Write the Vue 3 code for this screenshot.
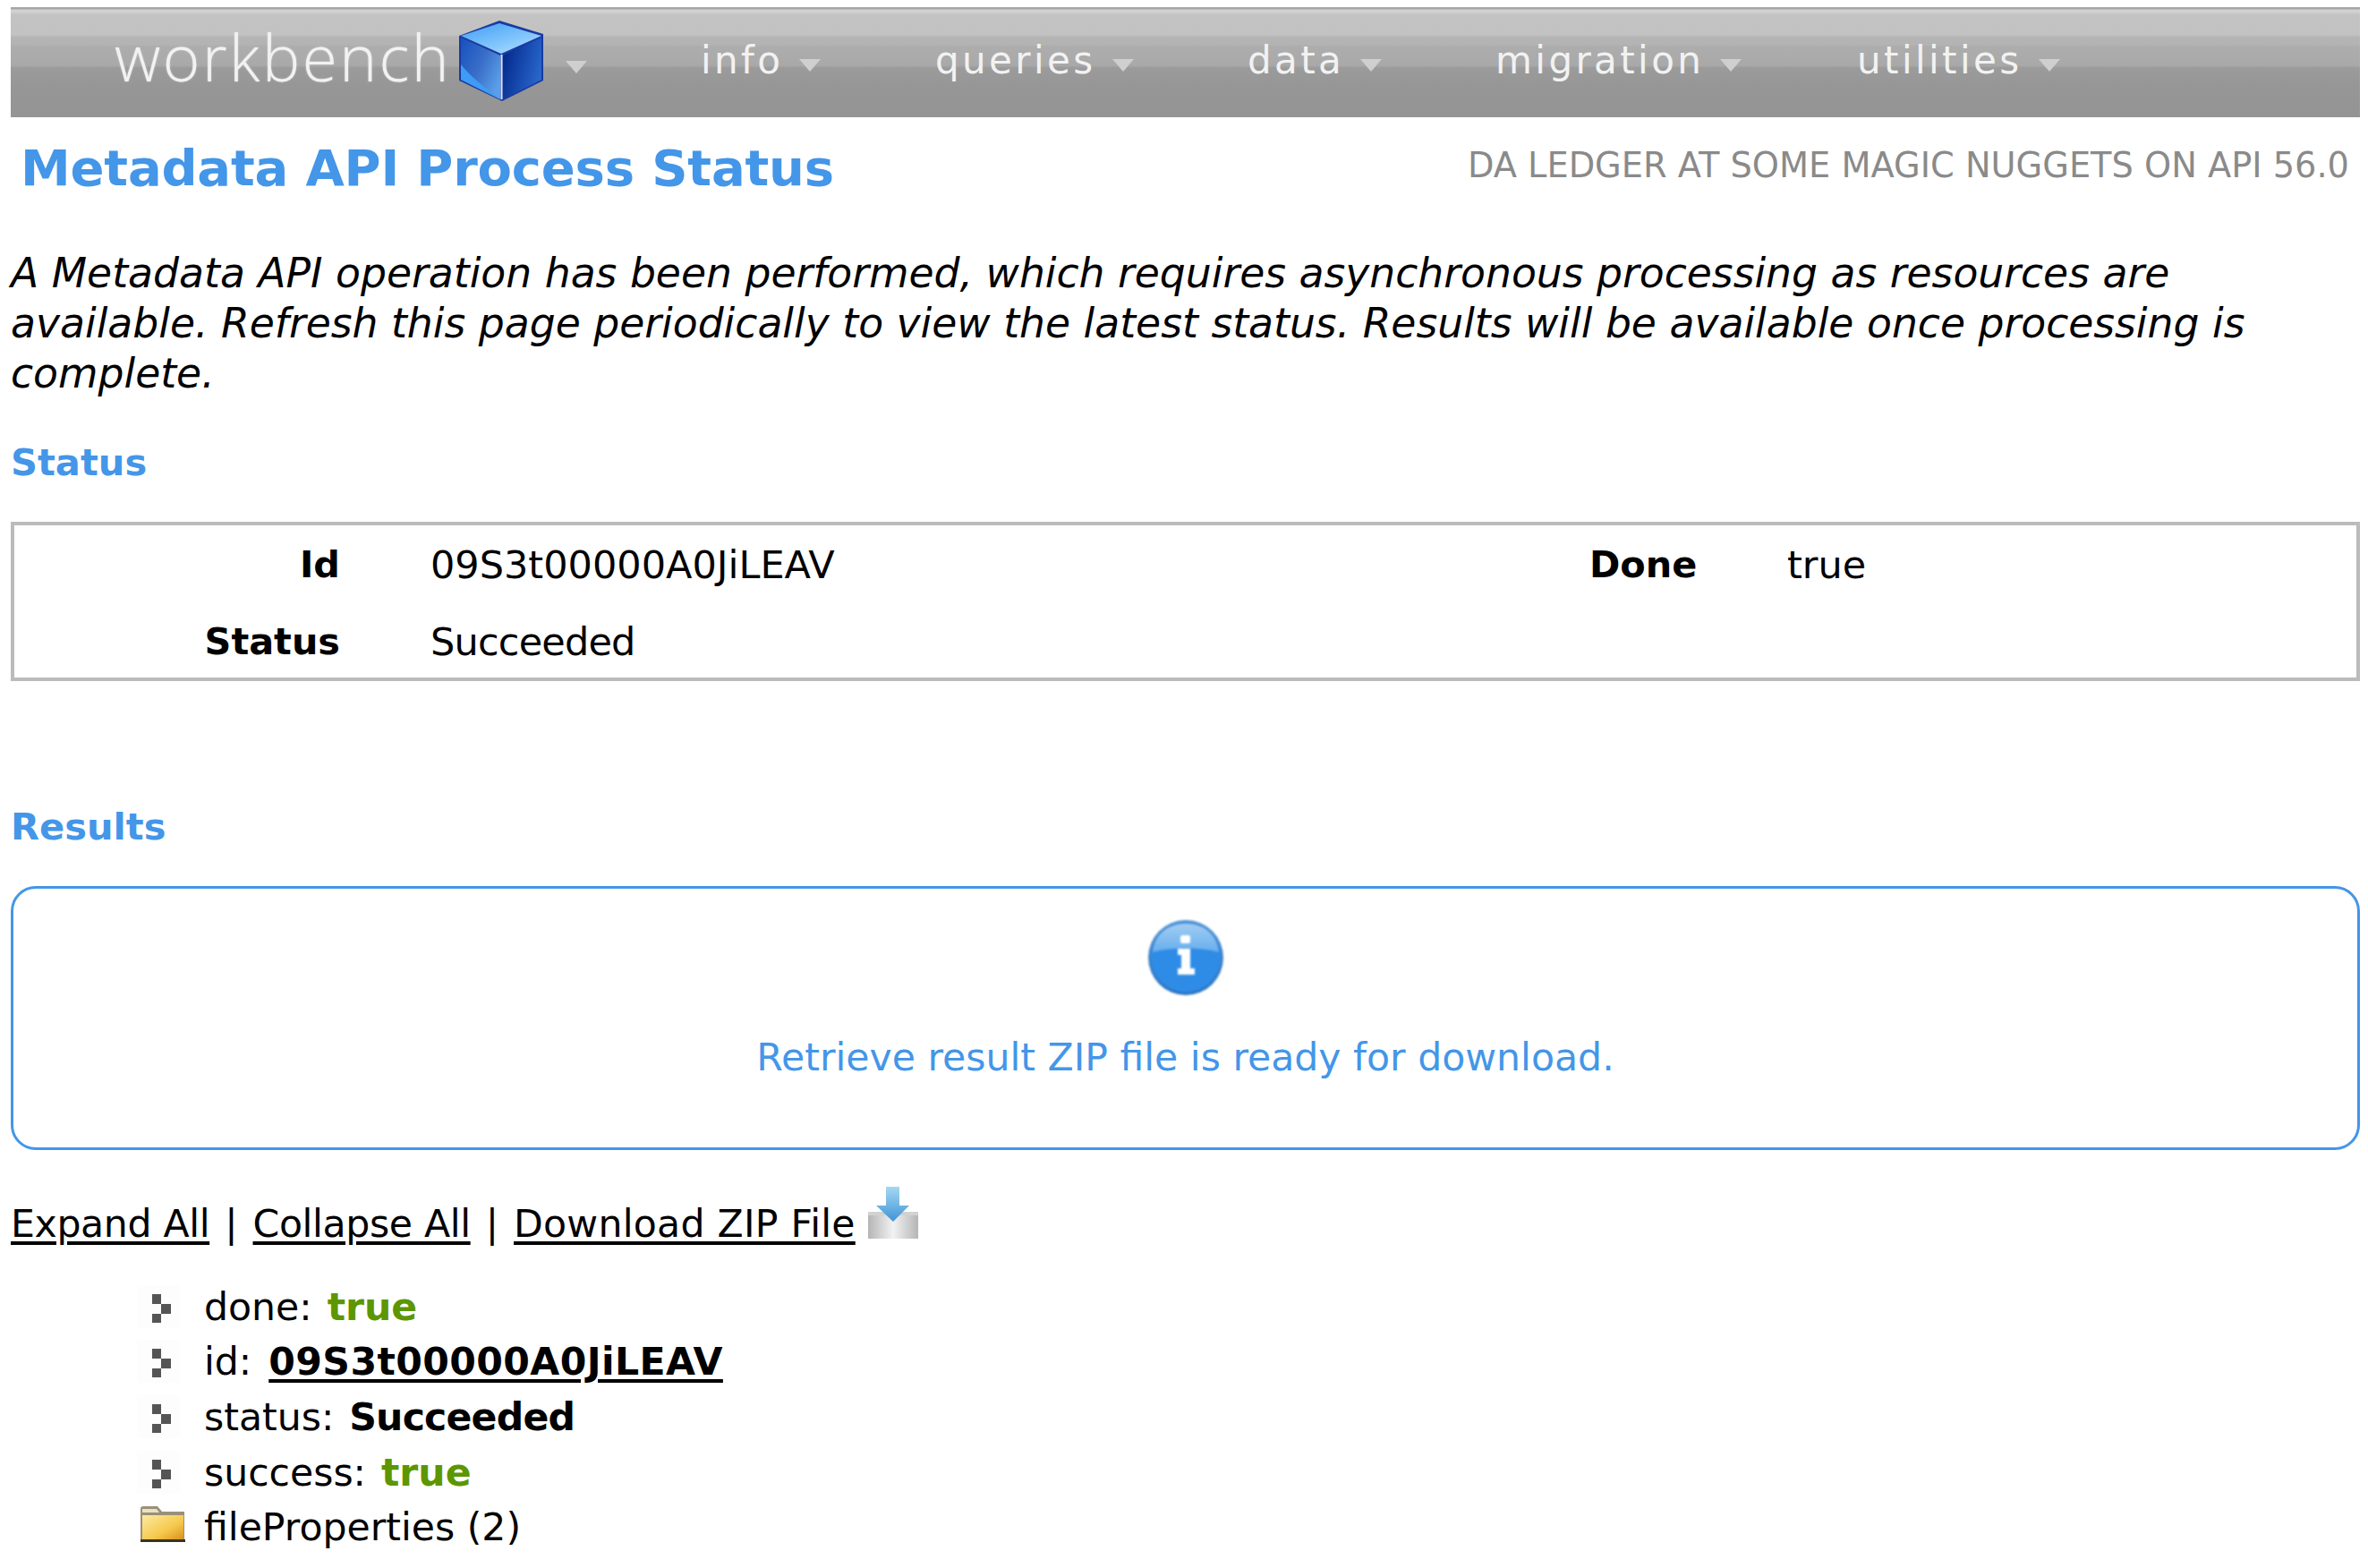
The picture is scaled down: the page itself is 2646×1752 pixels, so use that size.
<script setup>
const navItems = [
  { label: 'info', width: 262 },
  { label: 'queries', width: 349 },
  { label: 'data', width: 277 },
  { label: 'migration', width: 404 },
  { label: 'utilities', width: 260 }
]
const rows = [
  { key: 'done', value: 'true', kind: 'bool' },
  { key: 'id', value: '09S3t00000A0JiLEAV', kind: 'link' },
  { key: 'status', value: 'Succeeded', kind: 'strong' },
  { key: 'success', value: 'true', kind: 'bool' }
]
</script>

<template>
  <div class="page">
    <nav class="nav">
      <a class="logo">
        <span class="logo-text">workbench</span>
        <svg class="cube" viewBox="0 0 100 96" width="100" height="96">
          <defs>
            <linearGradient id="ctop" x1="0" y1="0" x2="0.8" y2="1">
              <stop offset="0" stop-color="#3f9df5" />
              <stop offset="1" stop-color="#a8dcff" />
            </linearGradient>
            <linearGradient id="cleft" x1="0" y1="0" x2="1" y2="0.7">
              <stop offset="0" stop-color="#1550c0" />
              <stop offset="0.55" stop-color="#3a6fc8" />
              <stop offset="1" stop-color="#5a9fe8" />
            </linearGradient>
            <linearGradient id="cright" x1="0" y1="0.3" x2="1" y2="0.7">
              <stop offset="0" stop-color="#032a8c" />
              <stop offset="1" stop-color="#2b6ad0" />
            </linearGradient>
          </defs>
          <path d="M46 1 95 16 95 68 49 91 1 68 1 18Z" fill="#1a3aa0" />
          <path d="M46 4 93 18 48 38 3 18Z" fill="url(#ctop)" />
          <path d="M3 20 47 40 47 89 3 67Z" fill="url(#cleft)" />
          <path d="M50 40 93 20 93 67 50 89Z" fill="url(#cright)" />
          <path d="M3 50C12 62 30 76 47 89L3 67Z" fill="#3e9bf6" />
          <path d="M48.500 39V89" stroke="#dbe6f6" stroke-width="2" />
        </svg>
        <i class="caret"></i>
      </a>
      <ul class="menu">
        <li v-for="item in navItems" :key="item.label" class="menu-item" :style="{ width: item.width + 'px' }">
          <span>{{ item.label }}</span>
          <i class="caret"></i>
        </li>
      </ul>
    </nav>

    <header class="title-row">
      <h1>Metadata API Process Status</h1>
      <div class="user">DA LEDGER AT SOME MAGIC NUGGETS ON API 56.0</div>
    </header>

    <p class="intro">A Metadata API operation has been performed, which requires asynchronous processing as resources are available. Refresh this page periodically to view the latest status. Results will be available once processing is complete.</p>

    <h2 class="status-heading">Status</h2>
    <div class="status-box">
      <div class="label">Id</div>
      <div class="value">09S3t00000A0JiLEAV</div>
      <div class="label">Done</div>
      <div class="value last">true</div>
      <div class="label">Status</div>
      <div class="value narrow">Succeeded</div>
    </div>

    <h2 class="results-heading">Results</h2>
    <div class="info-box">
      <svg class="info-icon" viewBox="0 0 84 84" width="84" height="84">
        <defs>
          <linearGradient id="iball" x1="0" y1="0" x2="0" y2="1">
            <stop offset="0" stop-color="#4f93d6" />
            <stop offset="1" stop-color="#2a76c4" />
          </linearGradient>
          <linearGradient id="igloss" x1="0" y1="0" x2="0" y2="1">
            <stop offset="0" stop-color="#a2cdf2" />
            <stop offset="1" stop-color="#66aeee" />
          </linearGradient>
        </defs>
        <circle cx="42" cy="42" r="42" fill="url(#iball)" />
        <circle cx="42" cy="42" r="38.500" fill="#2f8ce6" />
        <path d="M5 36C7 16 22 4 42 4S77 16 79 36C60 30 24 30 5 36Z" fill="url(#igloss)" />
        <rect x="36" y="17" width="11" height="9" rx="2" fill="#fff" />
        <path d="M33 32H47V54H52V61H33V54H37V39H33Z" fill="#fff" />
      </svg>
      <div class="info-text">Retrieve result ZIP file is ready for download.</div>
    </div>

    <div class="links">
      <a class="tight">Expand All</a><span class="sep">|</span><a class="tight">Collapse All</a><span class="sep">|</span><a class="wide">Download ZIP File</a>
      <svg class="dl-icon" viewBox="0 0 58 58" width="58" height="58">
        <defs>
          <linearGradient id="dbox" x1="0" y1="0" x2="1" y2="0">
            <stop offset="0" stop-color="#b5b5b5" />
            <stop offset="0.5" stop-color="#f2f2f2" />
            <stop offset="1" stop-color="#b5b5b5" />
          </linearGradient>
          <linearGradient id="darrow" x1="0" y1="0" x2="0" y2="1">
            <stop offset="0" stop-color="#a5d8f2" />
            <stop offset="1" stop-color="#3f94d8" />
          </linearGradient>
        </defs>
        <rect x="1" y="28" width="56" height="30" fill="url(#dbox)" />
        <path d="M1 28H57V32H1Z" fill="#d2d2d2" />
        <path d="M21 0H36V21H47L29 39 10 21H21Z" fill="url(#darrow)" />
      </svg>
    </div>

    <ul class="tree">
      <li v-for="row in rows" :key="row.key" class="tree-row">
        <svg class="bullet" viewBox="0 0 48 48" width="48" height="48">
          <rect x="0" y="0" width="48" height="48" fill="#fdfdfd" />
          <rect x="17" y="10" width="10" height="11" fill="#555" />
          <rect x="27" y="21" width="11" height="11" fill="#555" />
          <rect x="17" y="32" width="10" height="10" fill="#555" />
        </svg>
        <span class="key">{{ row.key }}:</span>
        <a v-if="row.kind === 'link'" class="val strong link">{{ row.value }}</a>
        <span v-else class="val strong" :class="{ green: row.kind === 'bool', narrow: row.kind === 'strong' }">{{ row.value }}</span>
      </li>
      <li class="tree-row">
        <svg class="folder" viewBox="0 0 52 40" width="52" height="40">
          <defs>
            <linearGradient id="fold" x1="0" y1="0" x2="1" y2="1">
              <stop offset="0" stop-color="#fbeaa0" />
              <stop offset="0.6" stop-color="#f6c94e" />
              <stop offset="1" stop-color="#d8921c" />
            </linearGradient>
          </defs>
          <path d="M1 3C1 1 2 0 4 0H20L25 6H50V40H1Z" fill="#9a9078" />
          <path d="M3 3H19L22 7H3Z" fill="#e9e2c2" />
          <rect x="3" y="10" width="46" height="27" fill="url(#fold)" />
          <rect x="1" y="37" width="50" height="3" fill="#3a3320" />
        </svg>
        <span class="key">fileProperties (2)</span>
      </li>
    </ul>
  </div>
</template>

<style scoped>
.page {
  box-sizing: border-box;
  width: 2646px;
  height: 1752px;
  overflow: hidden;
  padding: 8px 9px 0 12px;
  font-family: "DejaVu Sans", Verdana, sans-serif;
  font-size: 42.6px;
  color: #000;
  background: #fff;
}
ul { list-style: none; margin: 0; padding: 0; }
.nav {
  display: flex;
  align-items: flex-start;
  height: 123px;
  background: linear-gradient(to bottom, #a6a6a6 0, #a6a6a6 2px, #d2d2d2 3px, #d0d0d0 6px, #c3c3c3 8px, #c2c2c2 31px, #b5b5b5 33px, #b3b3b3 42px, #adadad 44px, #a9a9a9 65px, #9b9b9b 68px, #969696 90px, #949494 123px);
}
.logo {
  display: flex;
  align-items: flex-start;
  width: 771px;
  flex: none;
  padding-left: 116px;
  box-sizing: border-box;
}
.logo-text {
  width: 384px;
  margin-top: 8px;
  font-family: "Open Sans", sans-serif;
  font-weight: 300;
  font-size: 71px;
  line-height: 96px;
  letter-spacing: 2.500px;
  color: #f2f2f2;
  text-shadow: 0 0 2px rgba(255, 255, 255, 0.6);
  white-space: nowrap;
}
.cube { flex: none; margin-top: 14px; filter: blur(0.5px); }
.caret {
  flex: none;
  width: 0;
  height: 0;
  border-left: 12px solid transparent;
  border-right: 12px solid transparent;
  border-top: 14px solid #cfcfcf;
}
.logo .caret { margin: 60px 0 0 20px; }
.menu { display: flex; align-items: flex-start; }
.menu-item {
  display: flex;
  align-items: flex-start;
  flex: none;
  font-size: 42px;
  line-height: 50px;
  margin-top: 35px;
  letter-spacing: 3.400px;
  color: #f2f2f2;
}
.menu-item .caret { margin: 23px 0 0 18px; }
.title-row {
  display: flex;
  justify-content: space-between;
  align-items: flex-start;
  margin-top: 22px;
  padding: 0 12px 0 11px;
}
h1 {
  margin: 0;
  font-size: 56px;
  line-height: 70px;
  font-weight: 700;
  letter-spacing: -0.200px;
  color: #4496e8;
}
.user {
  font-size: 38.300px;
  line-height: 46px;
  margin-top: 9px;
  color: #8a8a8a;
}
.intro {
  margin: 55px 0 0;
  font-size: 45.650px;
  line-height: 56px;
  font-style: italic;
}
h2 {
  margin: 0;
  font-size: 41.600px;
  line-height: 54px;
  font-weight: 700;
  color: #4496e8;
}
.status-heading { margin-top: 44px; }
.status-box {
  display: grid;
  grid-template-columns: 364px 1396px 117px 1fr;
  grid-auto-rows: 86px;
  margin-top: 39px;
  height: 178px;
  box-sizing: border-box;
  padding-top: 7px;
  border: 4px solid #bbbbbb;
  line-height: 74px;
}
.label { text-align: right; font-weight: 700; white-space: nowrap; font-size: 41.400px; }
.value { padding-left: 101px; white-space: nowrap; font-size: 43px; }
.value.last { padding-left: 104px; }
.narrow { letter-spacing: -0.800px; }
.results-heading { margin-top: 136px; }
.info-box {
  box-sizing: border-box;
  height: 295px;
  margin-top: 39px;
  padding-top: 35px;
  border: 3px solid #4496e8;
  border-radius: 28px;
  text-align: center;
  color: #4496e8;
}
.info-icon { display: block; margin: 0 auto; filter: blur(0.8px); }
.info-text { margin-top: 42px; line-height: 54px; }
.links {
  display: flex;
  align-items: flex-end;
  margin-top: 48px;
  height: 60px;
  line-height: 52px;
}
.links a { text-decoration: underline; text-decoration-thickness: 4px; text-underline-offset: 5px; }
.tight { letter-spacing: -0.350px; }
.wide { letter-spacing: 0.250px; }
.sep { margin: 0 17px; }
.dl-icon { margin: 0 0 9px 13px; filter: blur(0.4px); }
.tree { margin-top: 36px; padding-left: 141px; }
.tree-row {
  display: flex;
  align-items: center;
  height: 61.600px;
  line-height: 60px;
  white-space: pre;
}
.bullet { flex: none; width: 48px; height: 48px; margin-right: 27px; filter: blur(0.5px); }
.folder { flex: none; margin: -6px 20px 0 3px; filter: blur(0.4px); }
.val { margin-left: 17px; }
.strong { font-weight: 700; }
.green { color: #5c9600; }
.link { margin-left: 19px; letter-spacing: 0.400px; text-decoration: underline; text-decoration-thickness: 4px; text-underline-offset: 5px; }
</style>
